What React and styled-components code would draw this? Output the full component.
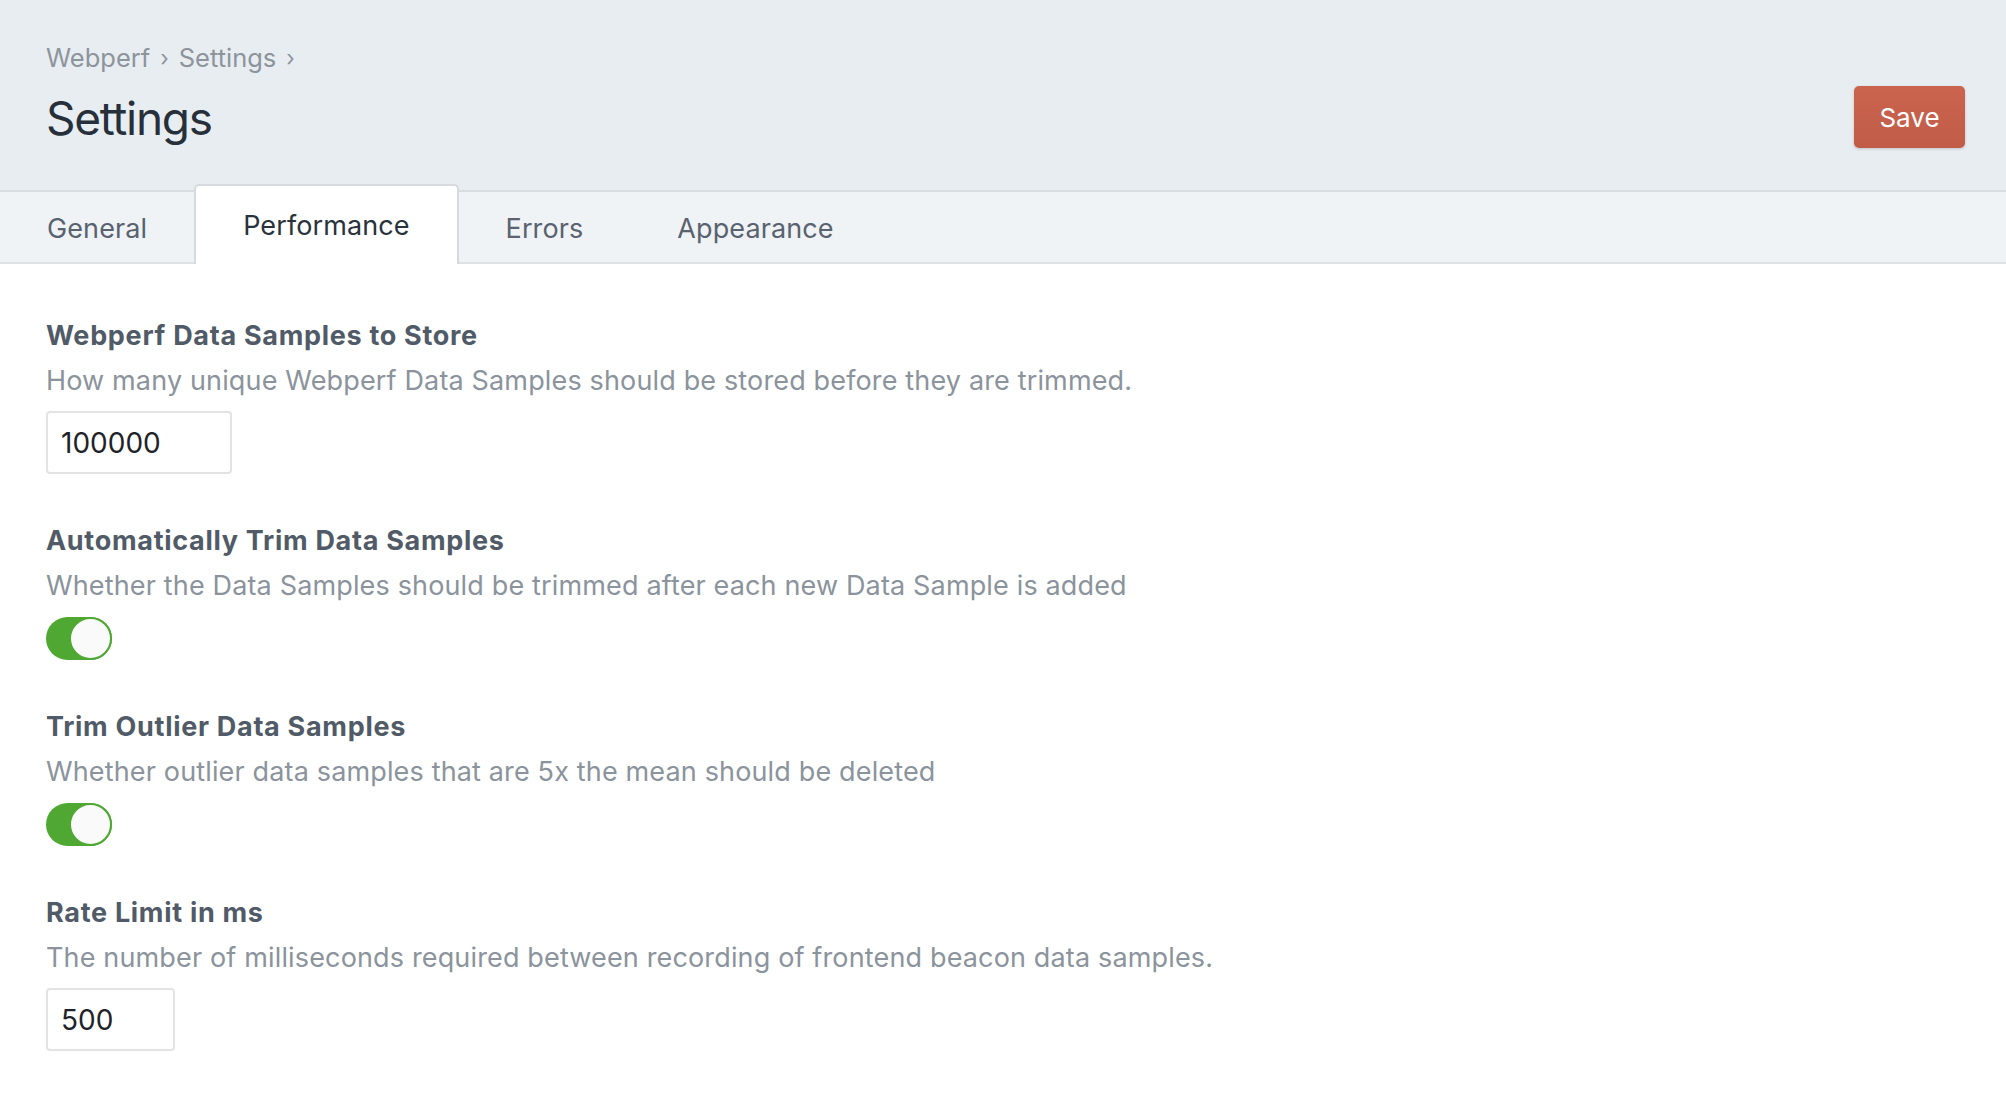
import React, { useState } from "react";
import styled, { createGlobalStyle } from "styled-components";

const GlobalStyle = createGlobalStyle`
  html, body {
    margin: 0;
    padding: 0;
    background: #ffffff;
    font-family: Inter, "Liberation Sans", Arial, sans-serif;
    -webkit-font-smoothing: antialiased;
  }
  * { box-sizing: border-box; }
`;

const Page = styled.div`
  min-height: 1097px;
  background: #ffffff;
`;

const Header = styled.header`
  display: flex;
  align-items: flex-end;
  justify-content: space-between;
  background: #e8edf1;
  padding: 43px 41px 42px 46px;
  border-bottom: 2px solid #d8dde2;
`;

const TitleBlock = styled.div`
  display: flex;
  flex-direction: column;
`;

const Breadcrumb = styled.nav`
  display: flex;
  align-items: center;
  gap: 10px;
  font-size: 25.5px;
  line-height: 30px;
  color: #8d949c;
`;

const Crumb = styled.span`
  color: #8d949c;
`;

const Chevron = styled.span`
  font-size: 22px;
  color: #8d949c;
`;

const Title = styled.h1`
  margin: 15px 0 0;
  font-size: 46px;
  line-height: 60px;
  font-weight: 400;
  color: #27303a;
  letter-spacing: -1.3px;
`;

const SaveButton = styled.button`
  width: 111px;
  height: 62px;
  border: none;
  border-radius: 5px;
  background: linear-gradient(#cb644f, #c05c48);
  box-shadow: 0 1px 3px rgba(0, 0, 0, 0.18);
  color: #ffffff;
  font-family: inherit;
  font-size: 26px;
  cursor: pointer;
`;

const TabBar = styled.div`
  display: flex;
  background: #eff3f6;
  height: 72px;
  border-bottom: 2px solid #dee2e6;
`;

const Tab = styled.div`
  display: flex;
  align-items: center;
  padding: 0 47px;
  font-size: 27px;
  letter-spacing: 0.1px;
  color: ${(p) => (p.$active ? "#2a323c" : "#59626e")};
  background: ${(p) => (p.$active ? "#ffffff" : "transparent")};
  border: ${(p) => (p.$active ? "2px solid #d6dadf" : "none")};
  border-bottom: none;
  border-radius: ${(p) => (p.$active ? "5px 5px 0 0" : "0")};
  margin-top: ${(p) => (p.$active ? "-8px" : "0")};
  margin-bottom: ${(p) => (p.$active ? "-2px" : "0")};
  padding-top: ${(p) => (p.$active ? "0" : "2px")};
  cursor: pointer;
`;

const Content = styled.main`
  padding: 55px 46px 40px;
  display: flex;
  flex-direction: column;
  gap: 50px;
`;

const Field = styled.section`
  display: flex;
  flex-direction: column;
  align-items: flex-start;
`;

const Label = styled.label`
  font-size: 27px;
  line-height: 34px;
  font-weight: 700;
  color: #515a67;
  letter-spacing: 0.7px;
`;

const Description = styled.p`
  margin: 11px 0 13px;
  font-size: 27px;
  line-height: 34px;
  color: #8b939c;
  letter-spacing: 0.15px;
`;

const NumberInput = styled.input`
  width: ${(p) => p.$width}px;
  height: 63px;
  border: 2px solid #e3e3e3;
  border-radius: 4px;
  padding: 0 13px;
  font-family: inherit;
  font-size: 28px;
  color: #1f2329;
  background: #ffffff;
  outline: none;
`;

const Toggle = styled.button`
  position: relative;
  width: 66px;
  height: 43px;
  padding: 0;
  border: none;
  border-radius: 22px;
  background: ${(p) => (p.$on ? "#4ea832" : "#d9dde1")};
  cursor: pointer;
  margin-top: 1px;
`;

const Knob = styled.span`
  position: absolute;
  top: 0;
  ${(p) => (p.$on ? "right: 0;" : "left: 0;")}
  width: 43px;
  height: 43px;
  border-radius: 50%;
  background: #fafafa;
  border: 2px solid ${(p) => (p.$on ? "#4ea832" : "#d9dde1")};
`;

function Switch({ initial }) {
  const [on, setOn] = useState(initial);
  return (
    <Toggle $on={on} onClick={() => setOn(!on)} aria-pressed={on}>
      <Knob $on={on} />
    </Toggle>
  );
}

const tabs = ["General", "Performance", "Errors", "Appearance"];

export default function App() {
  const [active, setActive] = useState("Performance");
  return (
    <Page>
      <GlobalStyle />
      <Header>
        <TitleBlock>
          <Breadcrumb>
            <Crumb>Webperf</Crumb>
            <Chevron>›</Chevron>
            <Crumb>Settings</Crumb>
            <Chevron>›</Chevron>
          </Breadcrumb>
          <Title>Settings</Title>
        </TitleBlock>
        <SaveButton>Save</SaveButton>
      </Header>
      <TabBar>
        {tabs.map((t) => (
          <Tab key={t} $active={t === active} onClick={() => setActive(t)}>
            {t}
          </Tab>
        ))}
      </TabBar>
      <Content>
        <Field>
          <Label>Webperf Data Samples to Store</Label>
          <Description>
            How many unique Webperf Data Samples should be stored before they are trimmed.
          </Description>
          <NumberInput $width={186} defaultValue="100000" />
        </Field>
        <Field>
          <Label>Automatically Trim Data Samples</Label>
          <Description>
            Whether the Data Samples should be trimmed after each new Data Sample is added
          </Description>
          <Switch initial={true} />
        </Field>
        <Field>
          <Label>Trim Outlier Data Samples</Label>
          <Description>
            Whether outlier data samples that are 5x the mean should be deleted
          </Description>
          <Switch initial={true} />
        </Field>
        <Field>
          <Label>Rate Limit in ms</Label>
          <Description>
            The number of milliseconds required between recording of frontend beacon data samples.
          </Description>
          <NumberInput $width={129} defaultValue="500" />
        </Field>
      </Content>
    </Page>
  );
}
